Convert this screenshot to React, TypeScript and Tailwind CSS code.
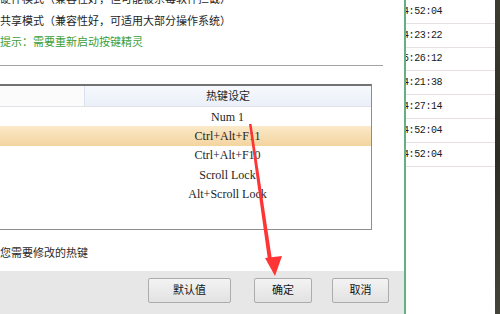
const times = ["4:52:04", "4:23:22", "5:26:12", "4:21:38", "4:27:14", "4:52:04", "4:52:04"];
const keys = ["Num 1", "Ctrl+Alt+F11", "Ctrl+Alt+F10", "Scroll Lock", "Alt+Scroll Lock"];

function Btn({ label, w }: { label: string; w: string }) {
  return (
    <button
      className={`${w} h-[25px] rounded-[2px] border border-[#acacac] bg-gradient-to-b from-[#f3f3f3] to-[#e2e2e2] text-[11px] leading-[23px] text-[#151515]`}
    >
      {label}
    </button>
  );
}

export default function App() {
  return (
    <div className="relative flex h-[314px] w-[500px] overflow-hidden bg-white font-['Liberation_Sans','Noto_Sans_CJK_SC',sans-serif] text-[11px] text-[#1e1e1e]">
      {/* dialog */}
      <div className="flex w-[404px] flex-col">
        <div className="h-[65px]">
          <div className="-mt-[11px] leading-[21.5px]">
            <p>硬件模式（兼容性好，但可能被杀毒软件拦截）</p>
            <p>共享模式（兼容性好，可适用大部分操作系统）</p>
            <p className="text-[#3a9e3a]">提示：需要重新启动按键精灵</p>
          </div>
        </div>
        <div className="h-px w-[383px] bg-[#a3a3a3]" />

        <div className="mt-[18px] flex h-[146px] w-[372px] flex-col border-t-2 border-r border-b border-t-[#727272] border-r-[#8d8d8d] border-b-[#8d8d8d]">
          <div className="flex h-[21px] border-b border-[#e4e0e8]">
            <div className="w-[84px] bg-[#fbfbfb]" />
            <div className="flex-1 border-l border-[#dbe2ef] bg-gradient-to-b from-[#f6f9fd] to-[#eaf0f9] text-center leading-[20px]">
              热键设定
            </div>
          </div>
          {keys.map((k, i) => (
            <div
              key={k}
              className={`flex h-[19.3px] items-center ${
                i === 1 ? "bg-gradient-to-b from-[#fbe9c9] to-[#f3d49e]" : ""
              }`}
            >
              <div className="w-[84px]" />
              <div className="flex-1 text-center font-['Liberation_Serif',serif] text-[12px]">{k}</div>
            </div>
          ))}
        </div>

        <div className="h-[41px] pt-[15px] leading-[16px] text-[#2a2a2a]">您需要修改的热键</div>

        <div className="flex h-[43px] bg-[#e7e7e7] pt-[7px] pl-[148px]">
          <Btn label="默认值" w="w-[83px]" />
          <div className="w-[23px]" />
          <Btn label="确定" w="w-[58px]" />
          <div className="w-[20px]" />
          <Btn label="取消" w="w-[57px]" />
        </div>
      </div>

      {/* side list */}
      <div className="w-[2px] bg-[#62b083]" />
      <div className="w-[89px] overflow-hidden">
        {times.map((t, i) => (
          <div
            key={i}
            className="flex h-[23.8px] items-center border-b border-[#e6e0e6] font-['Liberation_Mono',monospace] text-[10px] tracking-[-0.4px] text-[#1a1a1a]"
          >
            <span className="-ml-[3px]">{t}</span>
          </div>
        ))}
      </div>
      <div className="w-[5px] bg-gradient-to-b from-[#3d3c31] via-[#2e2d25] to-[#45443a]" />

      {/* red arrow */}
      <svg className="pointer-events-none absolute inset-0" width="500" height="314">
        <polygon points="249,124 251.5,124 272,260 268,260" fill="#ff3434" />
        <polygon points="265,258 282,256 275,276" fill="#ff3434" />
      </svg>
    </div>
  );
}
